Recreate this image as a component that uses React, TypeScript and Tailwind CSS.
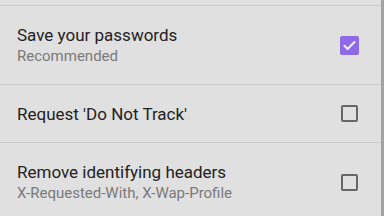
import React from 'react';

type Item = { title: string; subtitle?: string; checked: boolean };

const items: Item[] = [
  { title: 'Save your passwords', subtitle: 'Recommended', checked: true },
  { title: "Request 'Do Not Track'", checked: false },
  { title: 'Remove identifying headers', subtitle: 'X-Requested-With, X-Wap-Profile', checked: false },
];

const Checkbox = ({ checked }: { checked: boolean }) =>
  checked ? (
    <div className="w-[19px] h-[19px] rounded-[2px] bg-[#8e6ae6] flex items-center justify-center">
      <svg width="15" height="15" viewBox="0 0 24 24" fill="none">
        <path d="M4 12.5l5 5L20 6.5" stroke="#f3efff" strokeWidth="3.2" strokeLinecap="round" strokeLinejoin="round" />
      </svg>
    </div>
  ) : (
    <div className="w-[17px] h-[17px] rounded-[2px] border-2 border-[#666666] mx-[1px]" />
  );

export default function App() {
  return (
    <div className="w-[384px] h-[216px] overflow-hidden flex bg-[#e0e0e0] font-['Roboto',sans-serif]">
      <div className="flex-1 flex flex-col">
        <div className="h-[5px] shrink-0" />
        {items.map((item) => (
          <div key={item.title} className="shrink-0 border-t border-[#cacaca]">
            <div
              className={`flex items-center pl-[17px] pr-[22px] ${item.subtitle ? 'h-[78px]' : 'h-[57px]'}`}
            >
              <div className="flex-1 flex flex-col">
                <span className="text-[17px] leading-[22px] text-[#222222]">{item.title}</span>
                {item.subtitle && (
                  <span className="text-[15px] leading-[20px] text-[#7a7a7a]">{item.subtitle}</span>
                )}
              </div>
              <Checkbox checked={item.checked} />
            </div>
          </div>
        ))}
      </div>
      <div className="w-[3px] bg-[#a3a3a3] shrink-0" />
    </div>
  );
}
